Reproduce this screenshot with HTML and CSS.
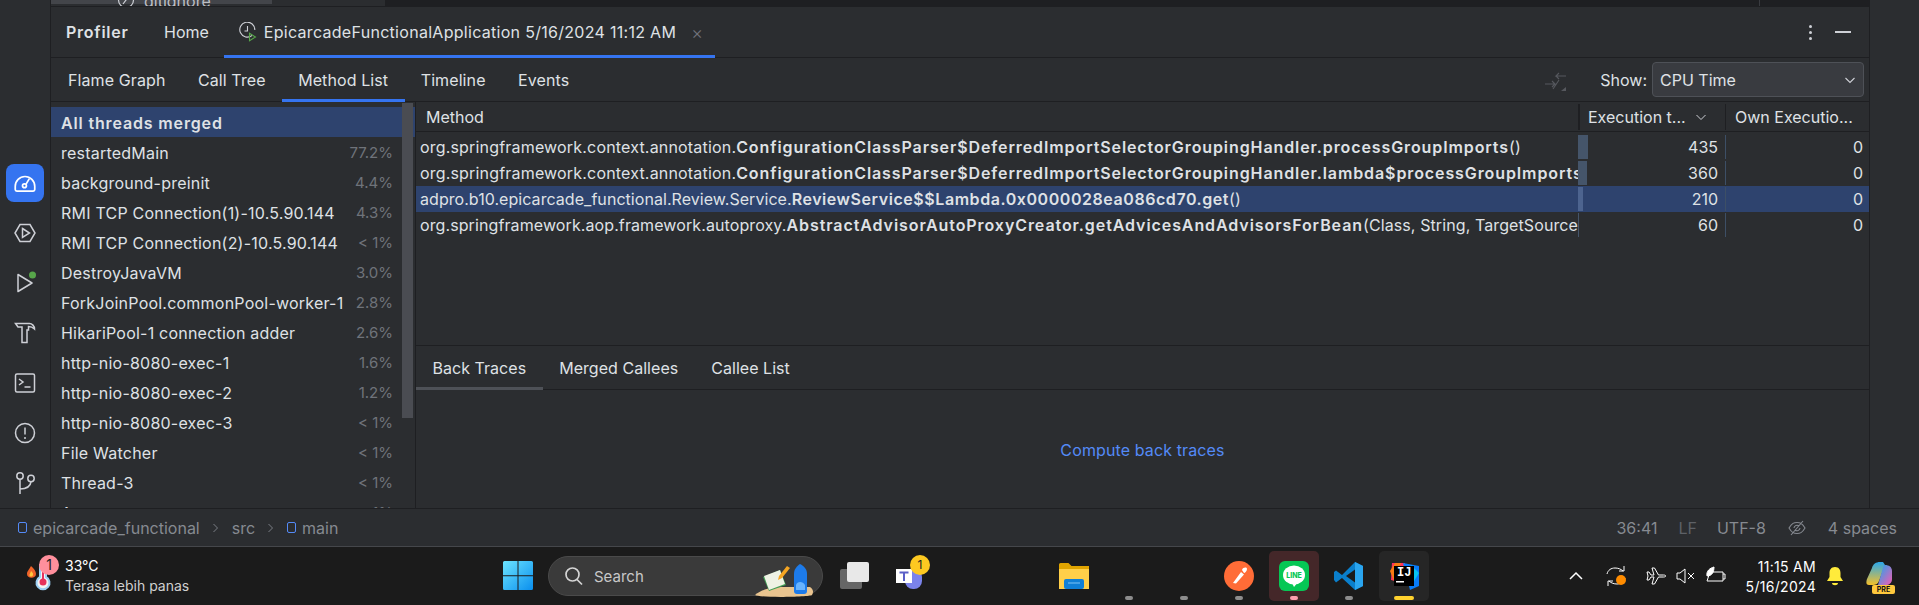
FILE: index.html
```html
<!DOCTYPE html>
<html lang="en">
<head>
<meta charset="utf-8">
<title>Profiler</title>
<link rel="stylesheet" href="styles.css">
</head>
<body>
<div class="ide">
  <div class="stripe">
    <div class="stripe-tool active"><svg width="26" height="26" viewBox="0 0 24 24" fill="none" stroke="#fff" stroke-width="1.600"><path d="M4.500 19.500h15a1.500 1.500 0 0 0 1.500-1.500v-3a9 9 0 0 0-18 0v3a1.500 1.500 0 0 0 1.500 1.500z"/><circle cx="11.500" cy="14.500" r="1.800"/><path d="M13 13l3-5"/></svg></div>
    <div class="stripe-tool"><svg width="24" height="24" viewBox="0 0 24 24" fill="none" stroke="#ced0d6" stroke-width="1.500"><path d="M7 3.500h10l5 8.500-5 8.500H7L2 12z"/><path d="M9.500 7.500l7 4.500-7 4.500z"/></svg></div>
    <div class="stripe-tool"><svg width="24" height="24" viewBox="0 0 24 24" fill="none" stroke="#ced0d6" stroke-width="1.500"><path d="M5 3.500l14 8.500-14 8.500z" stroke-linejoin="round"/><circle cx="19.500" cy="4" r="3.500" fill="#57a64a" stroke="none"/></svg></div>
    <div class="stripe-tool"><svg width="24" height="24" viewBox="0 0 24 24" fill="none" stroke="#ced0d6" stroke-width="1.500"><path d="M2.500 2.500h14c2.500 0 5 2.500 5 5.500-2-2-4-2.500-6-2.500V9h-1.500v12.500h-5V9H9V6H5z"/></svg></div>
    <div class="stripe-tool"><svg width="24" height="24" viewBox="0 0 24 24" fill="none" stroke="#ced0d6" stroke-width="1.500"><rect x="2.500" y="3" width="19" height="18" rx="1.500"/><path d="M6 8l4 3-4 3M11.500 16h6"/></svg></div>
    <div class="stripe-tool"><svg width="24" height="24" viewBox="0 0 24 24" fill="none" stroke="#ced0d6" stroke-width="1.500"><circle cx="12" cy="12" r="9.500"/><path d="M12 6.500v7"/><circle cx="12" cy="17" r="1" fill="#ced0d6" stroke="none"/></svg></div>
    <div class="stripe-tool"><svg width="24" height="24" viewBox="0 0 24 24" fill="none" stroke="#ced0d6" stroke-width="1.500"><circle cx="7" cy="5" r="3.200"/><circle cx="18" cy="7.500" r="3.200"/><path d="M7 8.200V23M7 18c6 0 10.500-2.500 11-7.300"/></svg></div>
  </div>
  <div class="center">
    <div class="editor-strip">
      <div class="editor-tree">
        <div class="file-tab">
          <svg width="18" height="18" viewBox="0 0 18 18" fill="none" stroke="#ced0d6" stroke-width="1.200"><circle cx="9" cy="9" r="7.500"/><path d="M6 13l6-8"/></svg>
          <span>gitignore</span>
        </div>
      </div>
      <div class="editor-area"></div>
      <div class="editor-side"></div>
    </div>
    <div class="tool-head">
      <span class="tool-title">Profiler</span>
      <span class="tool-tab">Home</span>
      <span class="tool-tab current">
        <svg width="20" height="20" viewBox="0 0 20 20" fill="none" stroke="#ced0d6" stroke-width="1.100"><path d="M14 13.500A7.500 7.500 0 1 1 16.800 8"/><path d="M9.500 4v5h-3"/><path d="M11.500 11.200l6 3.800-6 3.800z" stroke="#57a64a"/></svg>
        <span class="tab-text">EpicarcadeFunctionalApplication 5/16/2024 11:12 AM</span>
        <span class="tab-close">×</span>
      </span>
      <span class="head-spacer"></span>
      <span class="kebab"><i></i><i></i><i></i></span>
      <span class="minimize"></span>
    </div>
    <div class="view-tabs">
      <span class="view-tab">Flame Graph</span>
      <span class="view-tab">Call Tree</span>
      <span class="view-tab current">Method List</span>
      <span class="view-tab">Timeline</span>
      <span class="view-tab">Events</span>
      <span class="head-spacer"></span>
      <svg class="compare" width="24" height="24" viewBox="0 0 24 24" fill="none" stroke="#56585e" stroke-width="1.100"><path d="M22 8H12l3-3M12 8l3 3M1 16h10l-3-3M11 16l-3 3M9 21l6-9"/><path d="M22 19v4h-5z" fill="#56585e" stroke="none"/></svg>
      <span class="show-label">Show:</span>
      <span class="combo">CPU Time<svg width="12" height="12" viewBox="0 0 12 12" fill="none" stroke="#ced0d6" stroke-width="1.100"><path d="M1.500 4l4.500 4.500L10.500 4"/></svg></span>
    </div>
    <div class="split">
      <div class="threads">
        <div class="thread selected"><b>All threads merged</b></div>
        <div class="thread"><span>restartedMain</span><em>77.2%</em></div>
        <div class="thread"><span>background-preinit</span><em>4.4%</em></div>
        <div class="thread"><span>RMI TCP Connection(1)-10.5.90.144</span><em>4.3%</em></div>
        <div class="thread"><span>RMI TCP Connection(2)-10.5.90.144</span><em>&lt; 1%</em></div>
        <div class="thread"><span>DestroyJavaVM</span><em>3.0%</em></div>
        <div class="thread"><span>ForkJoinPool.commonPool-worker-1</span><em>2.8%</em></div>
        <div class="thread"><span>HikariPool-1 connection adder</span><em>2.6%</em></div>
        <div class="thread"><span>http-nio-8080-exec-1</span><em>1.6%</em></div>
        <div class="thread"><span>http-nio-8080-exec-2</span><em>1.2%</em></div>
        <div class="thread"><span>http-nio-8080-exec-3</span><em>&lt; 1%</em></div>
        <div class="thread"><span>File Watcher</span><em>&lt; 1%</em></div>
        <div class="thread"><span>Thread-3</span><em>&lt; 1%</em></div>
        <div class="thread"><span>Acceptor</span><em>&lt; 1%</em></div>
        <div class="scrollbar"></div>
      </div>
      <div class="methods">
        <div class="table">
          <div class="row header">
            <div class="col-method head-cell">Method</div>
            <div class="col-exec head-cell">Execution t...<svg width="12" height="12" viewBox="0 0 12 12" fill="none" stroke="#ced0d6" stroke-width="1"><path d="M1.500 4l4.500 4.500L10.500 4"/></svg></div>
            <div class="col-own head-cell">Own Executio...</div>
          </div>
          <div class="row">
            <div class="col-method"><span class="clip">org.springframework.context.annotation.<b>ConfigurationClassParser$DeferredImportSelectorGroupingHandler.processGroupImports</b>()</span></div>
            <div class="col-exec num"><i class="bar" style="width:10px"></i>435</div>
            <div class="col-own num">0</div>
          </div>
          <div class="row">
            <div class="col-method"><span class="clip">org.springframework.context.annotation.<b>ConfigurationClassParser$DeferredImportSelectorGroupingHandler.lambda$processGroupImports</b></span></div>
            <div class="col-exec num"><i class="bar" style="width:9px"></i>360</div>
            <div class="col-own num">0</div>
          </div>
          <div class="row selected">
            <div class="col-method"><span class="clip">adpro.b10.epicarcade_functional.Review.Service.<b>ReviewService$$Lambda.0x0000028ea086cd70.get</b>()</span></div>
            <div class="col-exec num"><i class="bar" style="width:5px"></i>210</div>
            <div class="col-own num">0</div>
          </div>
          <div class="row tight">
            <div class="col-method"><span class="clip">org.springframework.aop.framework.autoproxy.<b>AbstractAdvisorAutoProxyCreator.getAdvicesAndAdvisorsForBean</b>(Class, String, TargetSource)</span></div>
            <div class="col-exec num"><i class="bar" style="width:1px"></i>60</div>
            <div class="col-own num">0</div>
          </div>
        </div>
        <div class="lower">
          <div class="lower-tabs">
            <span class="lower-tab current">Back Traces</span>
            <span class="lower-tab">Merged Callees</span>
            <span class="lower-tab">Callee List</span>
          </div>
          <div class="lower-body"><span class="link">Compute back traces</span></div>
        </div>
      </div>
    </div>
  </div>
  <div class="stripe-right"></div>
</div>
<div class="status">
  <span class="crumb"><i class="folder-dot"></i>epicarcade_functional</span>
  <svg class="chev" width="8" height="10" viewBox="0 0 8 10" fill="none" stroke="#7a7e85"><path d="M1.500 1l4 4-4 4"/></svg>
  <span class="crumb">src</span>
  <svg class="chev" width="8" height="10" viewBox="0 0 8 10" fill="none" stroke="#7a7e85"><path d="M1.500 1l4 4-4 4"/></svg>
  <span class="crumb"><i class="folder-dot"></i>main</span>
  <span class="head-spacer"></span>
  <span class="stat pos">36:41</span>
  <span class="stat dim">LF</span>
  <span class="stat">UTF-8</span>
  <svg class="stat" width="18" height="18" viewBox="0 0 18 18" fill="none" stroke="#868a91" stroke-width="1.100"><path d="M1 9c3-5 5-5.500 8-5.500s5 .5 8 5.500c-3 5-5 5.500-8 5.500S4 14 1 9zM3 16L15 2M6 9a3 3 0 0 1 5-2M12 9a3 3 0 0 1-5 2"/></svg>
  <span class="stat">4 spaces</span>
</div>
<div class="taskbar">
  <div class="weather">
    <svg width="34" height="40" viewBox="0 0 34 40"><path d="M1 21c0-3 2-4 4-8 3 3 5 5 5 8 0 5-9 5-9 0z" fill="#f0642a"/><path d="M3.500 22c0-1 1-2 1.500-4 1 1 2.500 2 2 4-.5 2-3.500 2-3.500 0z" fill="#ffc83d"/><path d="M14 12h6v12a6.500 6.500 0 1 1-6 0z" fill="#f4f4f4" stroke="#9cd0f5" stroke-width="2"/><rect x="16" y="16" width="2" height="12" fill="#e5335d"/><circle cx="17" cy="29" r="3.500" fill="#e5335d"/><circle cx="23" cy="12" r="10" fill="#ff8f9c"/></svg>
    <span class="badge-one">1</span>
    <div class="weather-text"><span class="temp">33°C</span><span class="feels">Terasa lebih panas</span></div>
  </div>
  <div class="task-center">
    <svg class="winlogo" width="30" height="30" viewBox="0 0 30 30"><defs><linearGradient id="w" x1="0" y1="0" x2="1" y2="1"><stop offset="0" stop-color="#6ce4ff"/><stop offset="1" stop-color="#0a8fee"/></linearGradient></defs><path d="M0 1.500A1.500 1.500 0 0 1 1.500 0h13v14.200H0zM15.500 0h13A1.500 1.500 0 0 1 30 1.500v12.700H15.500zM0 15.200h14.500V29H1.500A1.500 1.500 0 0 1 0 27.500zM15.500 15.200H30v12.300a1.500 1.500 0 0 1-1.500 1.500h-13z" fill="url(#w)"/></svg>
    <div class="search">
      <svg width="20" height="20" viewBox="0 0 20 20" fill="none" stroke="#d4d4d4" stroke-width="1.700"><circle cx="8.500" cy="8.500" r="6.500"/><path d="M13 13.500l5 5"/></svg>
      <span>Search</span>
      <svg class="search-art" width="60" height="36" viewBox="0 0 60 36"><path d="M0 33c8-6 15-8 30-8h25c3 2 4 5 2 8-2 2-52 3-57 0z" fill="#e9c48f"/><path d="M8 15l17-7 6 15-17 6z" fill="#3f9c52"/><path d="M9 14l16-6 5 14-16 6z" fill="#eef2e4"/><path d="M24 14l8-10 3 2-8 10-4 2z" fill="#f5a623"/><path d="M39 12c0-5 3-8 6-10 4 2 7 5 7 10v17c0 2-1 3-3 3h-7c-2 0-3-1-3-3z" fill="#1d7bea"/><path d="M41 23c1-4 7-4 9 0v5h-9z" fill="#69b4ff"/></svg>
    </div>
    <svg class="task-icon" width="30" height="30" viewBox="0 0 30 30"><rect x="1" y="8" width="22" height="20" rx="2" fill="#666"/><rect x="8" y="1" width="22" height="20" rx="2" fill="#e8e8e8"/></svg>
    <div class="teams">
      <svg width="28" height="30" viewBox="0 0 28 30"><circle cx="21" cy="5" r="4" fill="#5b5fc7"/><rect x="9" y="7" width="17" height="20" rx="8" fill="#7b83eb"/><rect x="0" y="7" width="16" height="14" fill="#fff"/><path d="M3.500 9.500h9v2h-3.500v7.500H7v-7.500H3.500z" fill="#5b5fc7"/></svg>
      <span class="notif">1</span>
    </div>
    <div class="task-gap"></div>
    <div class="slot"><svg width="30" height="30" viewBox="0 0 30 30"><path d="M0 3.500A1.500 1.500 0 0 1 1.500 2h8l3 3H30v23H0z" fill="#e0a400"/><path d="M0 8h30v20H0z" fill="#ffcf49"/><rect x="5" y="18" width="20" height="10" rx="2" fill="#0f7fd6"/><path d="M9 22h12" stroke="#7cc4f5"/></svg></div>
    <div class="slot"><i class="dot"></i></div>
    <div class="slot"><i class="dot"></i></div>
    <div class="slot"><svg width="30" height="30" viewBox="0 0 30 30"><circle cx="15" cy="15" r="15" fill="#ff6c37"/><path d="M9 22l8-11 3 2.500-8 9zM18 9c1-3 5-3 5-1s-2 4-3 4z" fill="#fff"/></svg><i class="dot"></i></div>
    <div class="slot line-slot"><div class="line-app"><svg width="24" height="24" viewBox="0 0 24 24"><ellipse cx="12" cy="11" rx="11" ry="9.500" fill="#fff"/><path d="M10 19l2 4 4-5z" fill="#fff"/></svg><span>LINE</span></div><i class="dot pink"></i></div>
    <div class="slot"><svg width="30" height="30" viewBox="0 0 30 30"><path d="M21 1l8 4v20l-8 4-13-12-6 4.500L0 19v-8l2-1.500L8 14z" fill="#0a7fcc"/><path d="M21 1l8 4v20l-8 4z" fill="#2aa5ef"/><path d="M21 8.500L12 15l9 6.500z" fill="#1a1a1a"/></svg><i class="dot"></i></div>
    <div class="slot ij-slot"><svg width="30" height="30" viewBox="0 0 30 30"><path d="M3 2h13l-2 20-12-3z" fill="#fe315d"/><path d="M1 10L6 2h6L5 20z" fill="#f97a12"/><path d="M14 2l16 3v20l-9 4z" fill="#087cfa"/><path d="M22 4l8 8-6 10z" fill="#07c3f2"/><rect x="5" y="5" width="20" height="20" fill="#000"/><rect x="7" y="20" width="8" height="1.500" fill="#fff"/></svg><span class="ij-text">IJ</span><i class="dot wide"></i></div>
  </div>
  <div class="tray">
    <svg width="14" height="10" viewBox="0 0 14 10" fill="none" stroke="#fff" stroke-width="1.500"><path d="M1 8l6-6 6 6"/></svg>
    <svg class="t-sync" width="20" height="22" viewBox="0 0 20 22" fill="none" stroke="#fff" stroke-width="1"><path d="M1 9c1-4 4-6 8-6 3 0 6 1 8 3M18 1v5h-5M19 13c-1 4-4 6-8 6-3 0-6-1-8-3M2 21v-5h5"/><circle cx="15" cy="15" r="5" fill="#ff8c00" stroke="none"/></svg>
    <svg class="t-plane" width="20" height="20" viewBox="0 0 20 20" fill="none" stroke="#fff"><path d="M1 6h2l2 3h3L6 2h2.500l4 7h5c3 0 3 2 0 2h-5l-4 7H6l2-7H5l-2 3H1l1-4z"/></svg>
    <svg class="t-sound" width="19" height="18" viewBox="0 0 19 18" fill="none" stroke="#fff"><path d="M1 6v6h3l5 4V2L4 6zM12 6l6 6M18 6l-6 6"/></svg>
    <svg class="t-batt" width="20" height="20" viewBox="0 0 20 20" fill="none" stroke="#fff"><path d="M4 6h13v9H1zM17 8h2v5h-2"/><path d="M1 10C0 5 4 2 8 1c0 5-2 9-7 9z" fill="#fff"/></svg>
    <div class="clock"><span>11:15 AM</span><span>5/16/2024</span></div>
    <svg class="t-bell" width="16" height="20" viewBox="0 0 16 20"><path d="M8 1c4 0 5.500 3 5.500 6v4l2.500 4H0l2.500-4V7C2.500 4 4 1 8 1z" fill="#ffeb3b"/><path d="M5 17h6c0 3-6 3-6 0z" fill="#ffeb3b"/></svg>
    <div class="copilot"><svg width="28" height="28" viewBox="0 0 28 28"><defs><linearGradient id="c" x1="0" y1="0" x2="1" y2="1"><stop offset="0" stop-color="#1aa8f0"/><stop offset="1" stop-color="#f55bb2"/></linearGradient><linearGradient id="d" x1="0" y1="0" x2="0" y2="1"><stop offset="0" stop-color="#2aa7ea"/><stop offset="1" stop-color="#f5c02a"/></linearGradient></defs><path d="M6 7c1-4 4-6 8-6h3l2 3-6 16c-1 3-4 4-6 4H3C0 24 0 21 1 18z" fill="url(#d)"/><path d="M19 4c4 0 7 2 7 6v8c0 4-3 6-6 6h-8l4-14c1-3 1-6 3-6z" fill="url(#c)"/></svg><span class="pre">PRE</span></div>
  </div>
</div>
</body>
</html>
```
FILE: styles.css
```css
* { box-sizing: border-box; }
html, body { margin: 0; padding: 0; }
body {
  width: 1919px; height: 605px; overflow: hidden;
  background: #2b2d30; color: #dfe1e5;
  font-family: Inter, "Liberation Sans", sans-serif; font-size: 16px;
}
b { font-weight: 600; letter-spacing: .85px; }
em { font-style: normal; }

.ide { display: flex; height: 509px; border-bottom: 1px solid #1e1f22; }
.stripe { width: 51px; flex: none; border-right: 1px solid #1e1f22; padding-top: 164px; display: flex; flex-direction: column; align-items: center; gap: 12px; }
.stripe-tool { width: 38px; height: 38px; display: flex; align-items: center; justify-content: center; border-radius: 8px; flex: none; }
.stripe-tool.active { background: #3574f0; }
.center { flex: 1; min-width: 0; display: flex; flex-direction: column; }
.stripe-right { width: 50px; flex: none; border-left: 1px solid #1e1f22; }

.editor-strip { height: 6px; display: flex; background: #1e1f22; overflow: hidden; flex: none; }
.editor-tree { width: 334px; background: #2b2d30; flex: none; }
.file-tab { width: 221px; height: 4px; background: #43454a; color: #bcbec4; padding-left: 66px; display: flex; gap: 9px; white-space: nowrap; }
.file-tab svg { flex: none; margin-top: -9px; }
.file-tab span { margin-top: -9px; }
.editor-area { flex: 1; }
.editor-side { width: 110px; border-left: 1px solid #393b40; }

.tool-head { height: 52px; flex: none; display: flex; align-items: center; border-top: 1px solid #1e1f22; border-bottom: 1px solid #1e1f22; padding-left: 15px; }
.tool-title { font-weight: 600; letter-spacing: .75px; width: 62px; margin-right: 36px; white-space: nowrap; }
.tool-tab { display: flex; align-items: center; height: 100%; position: relative; }
.tool-tab:nth-child(2) { margin-right: 15px; }
.tool-tab.current { padding-left: 14px; gap: 6px; width: 491px; white-space: nowrap; }
.tab-text { letter-spacing: .29px; }
.tool-tab.current::after, .view-tab.current::after { content: ""; position: absolute; left: 0; right: 0; bottom: -1px; height: 3px; background: #3574f0; }
.tab-close { margin-left: 9px; color: #6f737a; font-size: 18px; font-weight: 300; }
.head-spacer { flex: 1; }
.kebab { display: flex; flex-direction: column; gap: 3px; margin-right: 23px; }
.kebab i { width: 3px; height: 3px; border-radius: 50%; background: #ced0d6; }
.minimize { width: 16px; height: 1.500px; background: #ced0d6; margin-right: 18px; }

.view-tabs { height: 44px; flex: none; display: flex; align-items: center; border-bottom: 1px solid #1e1f22; padding-left: 1px; }
.view-tab { position: relative; height: 100%; display: flex; align-items: center; padding: 0 16.500px 0 16px; letter-spacing: .1px; }
.compare { margin-right: 32px; flex: none; }
.show-label { margin-right: 5px; }
.combo { width: 212px; height: 35px; margin-right: 5px; background: #393b40; border: 1px solid #4e5157; border-radius: 4px; display: flex; align-items: center; justify-content: space-between; padding: 0 7px 0 7px; }

.split { flex: 1; min-height: 0; display: flex; }
.threads { width: 365px; flex: none; position: relative; overflow: hidden; border-right: 1px solid #1e1f22; padding-top: 5px; }
.thread { height: 30px; display: flex; align-items: center; justify-content: space-between; padding: 1px 22px 0 10px; white-space: nowrap; }
.thread span { letter-spacing: .22px; }
.thread em { color: #6f737a; font-size: 15px; }
.thread.selected { background: #2e436e; }
.scrollbar { position: absolute; right: 2px; top: 1px; width: 11px; height: 315px; background: #4a4c52; }
.methods { flex: 1; min-width: 0; display: flex; flex-direction: column; }
.table { height: 244px; flex: none; border-bottom: 1px solid #1e1f22; }
.row { display: flex; height: 26px; }
.row.header { height: 30px; border-bottom: 1px solid #1e1f22; margin-bottom: 2px; padding-top: 1px; }
.row.selected { background: #2e436e; }
.col-method { width: 1162px; flex: none; padding-left: 4px; display: flex; align-items: center; overflow: hidden; white-space: nowrap; }
.clip { display: block; overflow: hidden; letter-spacing: .18px; }
.clip b { letter-spacing: .9px; }
.row.selected .clip { letter-spacing: .05px; }
.row.selected .clip b { letter-spacing: .56px; }
.row.tight .clip { letter-spacing: .1px; }
.row.tight .clip b { letter-spacing: .92px; }
.col-exec { width: 147px; flex: none; position: relative; display: flex; align-items: center; }
.col-own { flex: 1; display: flex; align-items: center; border-left: 1px solid #3d4f66; margin: 1px 0; }
.head-cell.col-method { padding-left: 10px; }
.head-cell.col-exec { padding-left: 8px; gap: 9px; border-left: 2px solid #1e1f22; margin: 1px 0; }
.head-cell.col-own { padding-left: 9px; border-left: 1px solid #1e1f22; white-space: nowrap; }
.num { justify-content: flex-end; padding-right: 7px; }
.col-own.num { padding-right: 6px; }
.bar { position: absolute; left: 0; top: 1px; bottom: 1px; background: #45556a; }
.row.selected .bar { background: #4d648f; }

.lower { flex: 1; display: flex; flex-direction: column; min-height: 0; }
.lower-tabs { height: 44px; flex: none; display: flex; align-items: center; border-bottom: 1px solid #1e1f22; }
.lower-tab { height: 100%; display: flex; align-items: center; padding: 0 16.500px; position: relative; letter-spacing: .04px; }
.lower-tab.current::after { content: ""; position: absolute; left: 0; right: 0; bottom: -1px; height: 3px; background: #4e5157; }
.lower-body { flex: 1; display: flex; align-items: flex-start; justify-content: center; padding-top: 50px; }
.link { color: #548af7; letter-spacing: .12px; }

.status { height: 38px; display: flex; align-items: center; padding-left: 18px; color: #868a91; border-bottom: 1px solid #45474b; }
.crumb { display: flex; align-items: center; gap: 6px; }
.folder-dot { width: 9px; height: 11px; border: 1.500px solid #548af7; border-radius: 2px; display: block; }
.chev { margin: 0 12px; }
.stat { margin-right: 22px; flex: none; }
.stat.pos { margin-right: 21px; }
.stat.dim { color: #5e6167; margin-right: 20px; }

.taskbar { height: 58px; background: #1b1b1b; position: relative; color: #fff; font-size: 14px; }
.weather { position: absolute; left: 26px; top: 6px; display: flex; align-items: flex-start; }
.badge-one { position: absolute; left: 13px; top: 2px; width: 20px; height: 20px; text-align: center; line-height: 20px; color: #222; }
.weather-text { margin-left: 5px; display: flex; flex-direction: column; gap: 3px; padding-top: 4px; line-height: 18px; }
.feels { color: #d0d0d0; margin-top: -1px; }
.task-center { position: absolute; left: 503px; top: 0; height: 58px; display: flex; align-items: center; }
.winlogo { margin-right: 15px; flex: none; }
.search { width: 275px; height: 40px; background: #3a3a3a; border: 1px solid #4a4a4a; border-radius: 20px; display: flex; align-items: center; padding-left: 15px; gap: 10px; color: #c8c8c8; position: relative; font-size: 15px; flex: none; }
.search-art { position: absolute; right: 7px; bottom: -3px; }
.task-icon { margin-left: 16px; flex: none; }
.teams { position: relative; margin-left: 27px; width: 40px; height: 40px; padding-top: 6px; flex: none; }
.notif { position: absolute; left: 14px; top: -1px; width: 20px; height: 20px; border-radius: 50%; background: #fdc921; color: #222; text-align: center; line-height: 20px; font-size: 12px; }
.task-gap { width: 113px; flex: none; }
.slot { width: 50px; height: 50px; position: relative; display: flex; align-items: center; justify-content: center; border-radius: 5px; flex: none; margin-right: 5px; }
.dot { position: absolute; bottom: 1px; left: 50%; margin-left: -4px; width: 8px; height: 4px; border-radius: 2px; background: #8d8d8d; }
.dot.pink { background: #ff9eae; }
.dot.wide { width: 20px; margin-left: -10px; background: #ffd22e; }
.line-slot { background: #442729; }
.ij-slot { background: #262626; }
.line-app { width: 30px; height: 30px; border-radius: 6px; background: #06c755; display: flex; align-items: center; justify-content: center; position: relative; }
.line-app span { position: absolute; top: 10px; left: 0; right: 0; text-align: center; font-size: 7px; font-weight: 800; color: #06c755; }
.ij-text { position: absolute; left: 18px; top: 16px; color: #fff; font-family: "Liberation Mono", monospace; font-weight: 700; font-size: 12px; line-height: 12px; }
.tray { position: absolute; right: 0; top: 0; height: 58px; display: flex; align-items: center; padding-right: 24px; }
.tray > svg { flex: none; }
.t-sync { margin-left: 23px; }
.t-plane { margin-left: 20px; }
.t-sound { margin-left: 10px; }
.t-batt { margin-left: 11px; }
.t-bell { margin-left: 11px; }
.clock { display: flex; flex-direction: column; align-items: flex-end; gap: 3px; line-height: 17px; width: 82px; margin-left: 8px; letter-spacing: .3px; }
.copilot { position: relative; width: 29px; height: 30px; margin-left: 23px; flex: none; }
.pre { position: absolute; left: 6px; bottom: -3px; width: 23px; height: 9px; background: #ffc83d; color: #111; border-radius: 2px; text-align: center; font-size: 7px; line-height: 9px; font-weight: 700; }
```
